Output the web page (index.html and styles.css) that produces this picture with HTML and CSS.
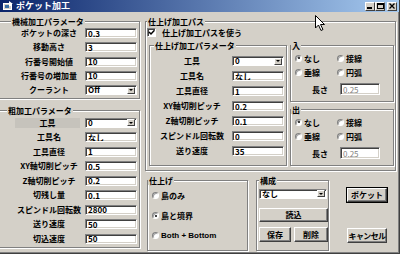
FILE: index.html
```html
<!DOCTYPE html>
<html lang="ja">
  <head>
    <meta charset="UTF-8" />
    <title>ポケット加工</title>
    <link rel="stylesheet" href="styles.css">
  </head>
  <body>
    <div class="window">
      <div class="titlebar">
        <svg class="app-icon" width="11" height="10" viewBox="0 0 11 10">
          <rect x="0.5" y="2.5" width="8" height="6" fill="#d4d0c8" stroke="#fff" />
          <rect x="2" y="4" width="4" height="3" fill="#3a6ea5" />
          <path d="M6 0 L10 3 L8 3 L8 5 L6 5 Z" fill="#fff" />
        </svg>
        <span class="title">ポケット加工</span>
        <div class="caption-btns">
          <span class="cap-btn">
            <svg width="6" height="6" viewBox="0 0 6 6"><rect x="0" y="4" width="5" height="2" fill="#000" /></svg>
          </span>
          <span class="cap-btn">
            <svg width="7" height="6" viewBox="0 0 7 6"><rect x="0.5" y="0.5" width="6" height="5" fill="none" stroke="#000" /><rect x="0" y="0" width="7" height="2" fill="#000" /></svg>
          </span>
          <span class="cap-btn close">
            <svg width="6" height="6" viewBox="0 0 6 6"><path d="M0.5 0.5 L5.5 5.5 M5.5 0.5 L0.5 5.5" stroke="#000" stroke-width="1.3" /></svg>
          </span>
        </div>
      </div>

      <div class="client">
        <div class="left-col">
          <fieldset class="group machine">
            <legend>機械加工パラメータ</legend>
            <div class="form">
              <label>ポケットの深さ</label><input class="edit" type="text" value="0.3">
              <label>移動高さ</label><input class="edit" type="text" value="3">
              <label>行番号開始値</label><input class="edit" type="text" value="10">
              <label>行番号の増加量</label><input class="edit" type="text" value="10">
              <label>クーラント</label>
              <div class="combo"><span>Off</span><i class="drop"></i></div>
            </div>
          </fieldset>

          <fieldset class="group rough">
            <legend>粗加工パラメータ</legend>
            <div class="form tall">
              <label><span class="hl">工具</span></label>
              <div class="combo"><span>0</span><i class="drop"></i></div>
              <label>工具名</label><input class="edit" type="text" value="なし">
              <label>工具直径</label><input class="edit" type="text" value="1">
              <label>XY軸切削ピッチ</label><input class="edit" type="text" value="0.5">
              <label>Z軸切削ピッチ</label><input class="edit" type="text" value="0.2">
              <label>切残し量</label><input class="edit" type="text" value="0.1">
              <label>スピンドル回転数</label><input class="edit" type="text" value="2800">
              <label>送り速度</label><input class="edit" type="text" value="50">
              <label>切込速度</label><input class="edit" type="text" value="50">
            </div>
          </fieldset>
        </div>

        <div class="right-col">
          <fieldset class="group finish-path">
            <legend>仕上げ加工パス</legend>
            <div class="check-row">
              <span class="checkbox">
                <svg width="7" height="7" viewBox="0 0 7 7"><path d="M1 3 L3 5 L6.5 1.2" fill="none" stroke="#000" stroke-width="1.5" /></svg>
              </span>
              <span>仕上げ加工パスを使う</span>
            </div>
            <div class="path-body">
              <fieldset class="group finish-params">
                <legend>仕上げ加工パラメータ</legend>
                <div class="form inner">
                  <label>工具</label>
                  <div class="combo"><span>0</span><i class="drop"></i></div>
                  <label>工具名</label><input class="edit" type="text" value="なし">
                  <label>工具直径</label><input class="edit" type="text" value="1">
                  <label>XY軸切削ピッチ</label><input class="edit" type="text" value="0.2">
                  <label>Z軸切削ピッチ</label><input class="edit" type="text" value="0.1">
                  <label>スピンドル回転数</label><input class="edit" type="text" value="0">
                  <label>送り速度</label><input class="edit" type="text" value="35">
                </div>
              </fieldset>

              <div class="approach-col">
                <fieldset class="group approach">
                  <legend>入</legend>
                  <div class="rb-grid">
                    <span class="rb"><i class="radio on"></i>なし</span>
                    <span class="rb"><i class="radio"></i>接線</span>
                    <span class="rb"><i class="radio"></i>垂線</span>
                    <span class="rb"><i class="radio"></i>円弧</span>
                  </div>
                  <div class="len-row">
                    <span class="len-label">長さ</span>
                    <input class="edit len" type="text" value="0.25" disabled>
                  </div>
                </fieldset>
                <fieldset class="group approach">
                  <legend>出</legend>
                  <div class="rb-grid">
                    <span class="rb"><i class="radio on"></i>なし</span>
                    <span class="rb"><i class="radio"></i>接線</span>
                    <span class="rb"><i class="radio"></i>垂線</span>
                    <span class="rb"><i class="radio"></i>円弧</span>
                  </div>
                  <div class="len-row">
                    <span class="len-label">長さ</span>
                    <input class="edit len" type="text" value="0.25" disabled>
                  </div>
                </fieldset>
              </div>
            </div>
          </fieldset>

          <div class="bottom-row">
            <fieldset class="group finish-mode">
              <legend>仕上げ</legend>
              <div class="radio-list">
                <span class="rb"><i class="radio"></i>島のみ</span>
                <span class="rb"><i class="radio on"></i>島と境界</span>
                <span class="rb latin"><i class="radio"></i>Both + Bottom</span>
              </div>
            </fieldset>

            <fieldset class="group config">
              <legend>構成</legend>
              <div class="combo wide"><span>なし</span><i class="drop"></i></div>
              <button class="btn btn-load">読込</button>
              <div class="btn-pair">
                <button class="btn btn-save">保存</button>
                <button class="btn btn-del">削除</button>
              </div>
            </fieldset>

            <div class="actions">
              <button class="btn default">ポケット</button>
              <button class="btn cancel">キャンセル</button>
            </div>
          </div>
        </div>
      </div>

      <svg class="cursor" width="11" height="17" viewBox="0 0 11 17">
        <path d="M0.5 0.5 L0.5 13 L3.5 10 L6 15.5 L8 14.5 L5.5 9.5 L9.5 9.5 Z" fill="#fff" stroke="#000" stroke-width="1" />
      </svg>
    </div>
  </body>
</html>
```

FILE: styles.css
```css
* {
  box-sizing: border-box;
  margin: 0;
  padding: 0;
}

body {
  width: 400px;
  height: 254px;
  overflow: hidden;
  background: #d4d0c8;
  font-family: "Noto Sans CJK JP", "Liberation Sans", sans-serif;
  font-size: 8px;
  font-weight: bold;
  color: #000;
}

.window {
  position: relative;
  width: 400px;
  height: 254px;
  display: flex;
  flex-direction: column;
  overflow: hidden;
  background: #d4d0c8;
  border-right: 1px solid #404040;
  border-bottom: 1px solid #404040;
  box-shadow: inset -1px -1px #808080;
}

/* title bar */

.titlebar {
  flex: none;
  height: 12px;
  display: flex;
  align-items: center;
  padding: 0 2px 0 3px;
  background: linear-gradient(to right, #0a246a, #a6caf0);
  color: #fff;
  font-size: 9px;
}

.app-icon {
  margin-right: 2px;
}

.title {
  line-height: 12px;
}

.caption-btns {
  margin-left: auto;
  display: flex;
}

.cap-btn {
  width: 10px;
  height: 9px;
  display: flex;
  align-items: center;
  justify-content: center;
  background: #d4d0c8;
  border: 1px solid;
  border-color: #fff #404040 #404040 #fff;
}

.cap-btn.close {
  margin-left: 2px;
}

/* layout */

.client {
  flex: 1;
  display: flex;
  gap: 5px;
  padding-top: 5px;
}

.left-col {
  width: 142px;
  margin-left: -2px;
  display: flex;
  flex-direction: column;
  gap: 7px;
}

.right-col {
  width: 251px;
  display: flex;
  flex-direction: column;
}

/* group boxes */

.group {
  min-width: 0;
  border: 1px solid #808080;
  box-shadow: inset 1px 1px #fff, 1px 1px #fff;
}

.group legend {
  padding: 0 1px;
  line-height: 9px;
  background: #d4d0c8;
  white-space: nowrap;
}

.machine legend {
  margin-left: 12px;
}

.rough legend {
  margin-left: 8px;
}

.finish-params legend {
  margin-left: 4px;
}

/* label / field grids */

.form {
  display: grid;
  grid-template-columns: 70px 52px;
  grid-auto-rows: 14.25px;
  align-items: center;
  column-gap: 1px;
  padding: 0 2px 1px 15px;
}

.form.tall {
  grid-auto-rows: 14.5px;
}

.form.inner {
  grid-template-columns: 74px 52px;
  grid-auto-rows: 15px;
  column-gap: 3px;
  padding: 3.5px 2px 5.5px 5px;
}

.form label {
  text-align: center;
  line-height: 10px;
  white-space: nowrap;
}

.hl {
  display: block;
  margin: 0 4px 0 1px;
  background: #c6c3bc;
}

.edit {
  width: 52px;
  height: 10px;
  padding: 0 2px;
  border: 1px solid;
  border-color: #808080 #fff #fff #808080;
  box-shadow: inset 1px 1px #404040, inset -1px -1px #d4d0c8;
  background: #fff;
  font-family: "Noto Sans CJK JP", "Liberation Sans", sans-serif;
  font-size: 8px;
  font-weight: bold;
  line-height: 8px;
  color: #000;
  outline: none;
}

.edit:disabled {
  color: #808080;
  font-weight: normal;
}

.combo {
  width: 52px;
  height: 10px;
  display: flex;
  align-items: center;
  padding: 0 1px 0 2px;
  border: 1px solid;
  border-color: #808080 #fff #fff #808080;
  box-shadow: inset 1px 1px #404040;
  background: #fff;
  line-height: 8px;
}

.combo span {
  flex: 1;
}

.drop {
  width: 8px;
  height: 7px;
  display: flex;
  align-items: center;
  justify-content: center;
  background: #d4d0c8;
  border: 1px solid;
  border-color: #fff #404040 #404040 #fff;
}

.drop::after {
  content: "";
  border-left: 2px solid transparent;
  border-right: 2px solid transparent;
  border-top: 2px solid #000;
}

.combo.wide {
  width: 68px;
}

/* finish path group */

.finish-path {
  padding: 0 1px 4px 1px;
}

.check-row {
  height: 12px;
  display: flex;
  align-items: center;
  gap: 6px;
}

.checkbox {
  width: 9px;
  height: 9px;
  display: flex;
  align-items: center;
  justify-content: center;
  background: #fff;
  border: 1px solid;
  border-color: #808080 #fff #fff #808080;
  box-shadow: inset 1px 1px #404040;
}

.path-body {
  display: flex;
  gap: 3px;
  margin-top: 3px;
  padding-left: 2px;
}

.finish-params {
  width: 138px;
}

.approach-col {
  width: 104px;
  display: flex;
  flex-direction: column;
  gap: 3.5px;
}

.approach {
  padding-bottom: 5.5px;
}

.rb-grid {
  display: grid;
  grid-template-columns: 42px auto;
  row-gap: 3.5px;
  padding: 2.5px 0 0 4px;
}

.rb {
  height: 11px;
  display: flex;
  align-items: center;
  gap: 2px;
  white-space: nowrap;
}

.radio {
  position: relative;
  width: 7px;
  height: 7px;
  background: #fff;
  border: 1px solid;
  border-color: #808080 #fff #fff #808080;
  border-radius: 50%;
  box-shadow: inset 1px 1px #a0a0a0;
}

.radio.on::after {
  content: "";
  position: absolute;
  left: 1.5px;
  top: 1.5px;
  width: 2px;
  height: 2px;
  border-radius: 50%;
  background: #000;
}

.len-row {
  height: 12px;
  display: flex;
  align-items: center;
  margin-top: 5px;
  padding-left: 21px;
}

.len-label {
  width: 28px;
}

.edit.len {
  width: 40px;
  height: 12px;
}

/* bottom row */

.bottom-row {
  height: 75px;
  display: flex;
  margin-top: 5px;
  padding-left: 2px;
}

.finish-mode {
  width: 101px;
}

.radio-list {
  display: flex;
  flex-direction: column;
  gap: 9px;
  padding: 5.5px 0 0 4px;
}

.rb.latin {
  font-family: "Liberation Sans", sans-serif;
}

.config {
  width: 73px;
  margin-left: 8px;
  padding: 4px 0 0 2px;
}

.btn {
  display: flex;
  align-items: center;
  justify-content: center;
  background: #d4d0c8;
  border: 1px solid;
  border-color: #fff #404040 #404040 #fff;
  box-shadow: inset -1px -1px #808080;
  font-family: "Noto Sans CJK JP", "Liberation Sans", sans-serif;
  font-size: 8px;
  font-weight: bold;
  color: #000;
  white-space: nowrap;
}

.btn-load {
  width: 69px;
  height: 14px;
  margin-top: 9px;
}

.btn-pair {
  display: flex;
  gap: 3px;
  margin-top: 5px;
}

.btn-save {
  width: 32px;
  height: 15px;
}

.btn-del {
  width: 34px;
  height: 15px;
}

.actions {
  width: 40px;
  margin-left: 18px;
  padding-top: 12px;
  display: flex;
  flex-direction: column;
}

.btn.default {
  height: 14px;
  box-shadow: 0 0 0 1px #000, inset -1px -1px #808080;
}

.btn.cancel {
  height: 15px;
  margin-top: 26px;
  letter-spacing: -0.6px;
}

/* mouse pointer over the dialog */

.cursor {
  position: absolute;
  left: 315px;
  top: 15px;
}
```
